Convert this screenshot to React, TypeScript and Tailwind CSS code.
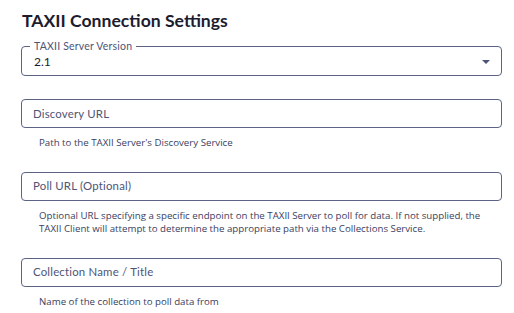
import React from "react";

const FIELDS = [
  {
    label: "Discovery URL",
    help: ["Path to the TAXII Server's Discovery Service"],
  },
  {
    label: "Poll URL (Optional)",
    help: [
      "Optional URL specifying a specific endpoint on the TAXII Server to poll for data. If not supplied, the",
      "TAXII Client will attempt to determine the appropriate path via the Collections Service.",
    ],
  },
  {
    label: "Collection Name / Title",
    help: ["Name of the collection to poll data from"],
  },
];

const TextField = ({ label, help }: { label: string; help: string[] }) => (
  <div className="flex flex-col">
    <div className="h-[29px] w-[481px] rounded-[4px] border border-[#5d6384] flex items-center pl-[11px]">
      <span className="text-[11.4px] text-[#4e5475] tracking-[0.2px]">{label}</span>
    </div>
    <div className="mt-[8px] pl-[18px] text-[9.7px] leading-[13.5px] text-[#3a4061] font-['Open_Sans',sans-serif]">
      {help.map((line) => (
        <div key={line}>{line}</div>
      ))}
    </div>
  </div>
);

export default function App() {
  return (
    <div className="w-[514px] h-[313px] bg-white overflow-hidden font-['Lato',sans-serif] px-[21px] pt-[9px]">
      <h1 className="text-[17.6px] leading-[24px] font-bold text-[#1c1c2e] pl-[1px]">
        TAXII Connection Settings
      </h1>

      {/* Version select */}
      <div className="relative mt-[13px] h-[30px] w-[481px] rounded-[4px] border border-[#5d6384] flex items-center justify-between pl-[12px] pr-[11px]">
        <span className="absolute left-[8px] -top-[7px] bg-white px-[4px] text-[10.5px] leading-[12px] tracking-[0.2px] text-[#4e5475]">
          TAXII Server Version
        </span>
        <span className="text-[12px] text-[#1c1c2e] mt-[2px]">2.1</span>
        <svg width="8" height="4" viewBox="0 0 8 4" className="mt-[1px]">
          <path d="M0 0 L8 0 L4 4 Z" fill="#4e5475" />
        </svg>
      </div>

      <div className="mt-[23px] flex flex-col gap-[22px]">
        {FIELDS.map((f) => (
          <TextField key={f.label} label={f.label} help={f.help} />
        ))}
      </div>
    </div>
  );
}
